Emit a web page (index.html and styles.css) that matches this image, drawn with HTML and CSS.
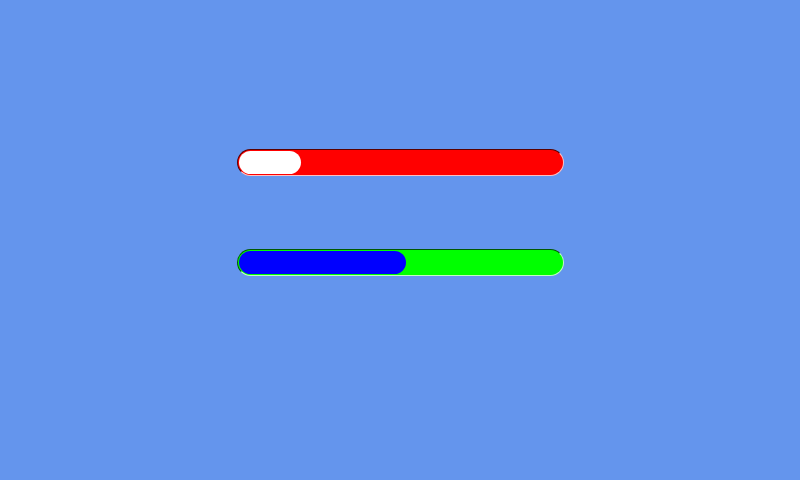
FILE: index.html
```html
<!DOCTYPE html>
<html>
<head>
<meta charset="utf-8">
<link rel="stylesheet" href="styles.css">
</head>
<body>
<div class="page">
  <div class="track track-red"><div class="bar bar-white" style="width:62px"></div></div>
  <div class="track track-green"><div class="bar bar-blue" style="width:167px"></div></div>
</div>
</body>
</html>
```
FILE: styles.css
```css
html, body {
  margin: 0;
  padding: 0;
  background: #6495ed;
  font-family: "Liberation Sans", sans-serif;
}
.page {
  width: 800px;
  height: 480px;
  box-sizing: border-box;
  padding-top: 149px;
  display: flex;
  flex-direction: column;
  align-items: center;
  gap: 73px;
}
.track {
  width: 327px;
  height: 27px;
  box-sizing: border-box;
  border-radius: 14px;
  padding: 1px;
  border-top: 1px solid rgba(0,0,0,0.65);
  border-left: 1px solid rgba(0,0,0,0.65);
  border-right: 1px solid rgba(255,255,255,0.75);
  border-bottom: 1px solid rgba(255,255,255,0.75);
  display: flex;
}
.track-red { background: #ff0000; }
.track-green { background: #00ff00; }
.bar {
  height: 100%;
  border-radius: 12px;
}
.bar-white { background: #ffffff; }
.bar-blue { background: #0000ff; }
```
